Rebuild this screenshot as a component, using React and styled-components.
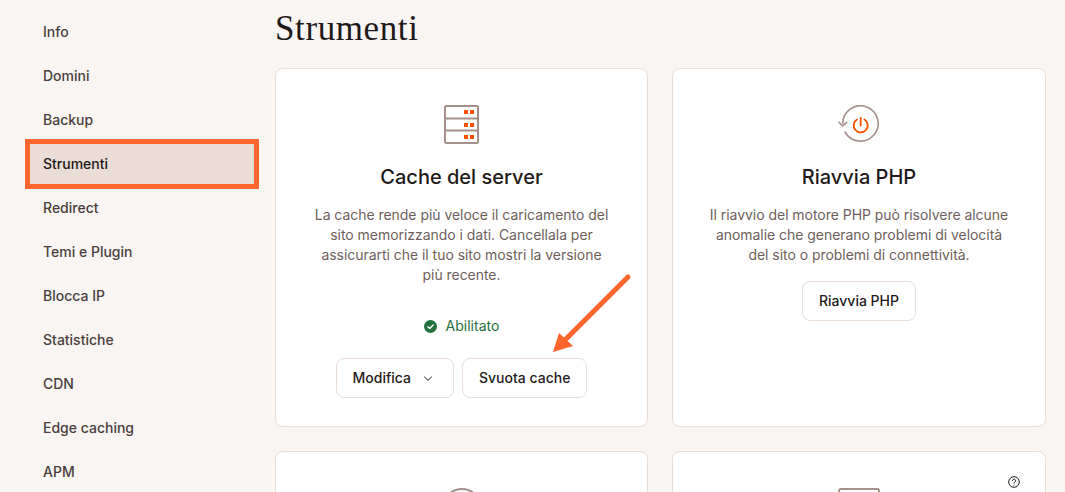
import React from 'react'
import styled, { createGlobalStyle } from 'styled-components'

const GlobalStyle = createGlobalStyle`
    html, body {
        margin: 0;
        height: 100%;
        background: #f8f5f2;
        font-family: Inter, "Liberation Sans", sans-serif;
        overflow: hidden;
    }
`

const Page = styled.div`
    position: relative;
    display: flex;
    width: 1065px;
    height: 492px;
    overflow: hidden;
    background: #f8f5f2;
`

const Sidebar = styled.nav`
    flex: none;
    width: 224px;
    margin: 12px 21px 0 30px;
    display: flex;
    flex-direction: column;
    gap: 4px;
`

const NavItem = styled.a`
    height: 40px;
    box-sizing: border-box;
    flex: none;
    display: flex;
    align-items: center;
    padding: 0 0 2px 13px;
    font-size: 14px;
    font-weight: 500;
    color: ${p => (p.$active ? '#1f1a19' : '#4a3f3d')};
    background: ${p => (p.$active ? '#e9ddd6' : 'transparent')};
    outline: ${p => (p.$active ? '5px solid #ff662d' : 'none')};
`

const Main = styled.main`
    flex: none;
    width: 771px;
`

const Title = styled.h1`
    margin: 8px 0 19px;
    height: 41px;
    font-family: "Liberation Serif", serif;
    font-size: 35px;
    line-height: 41px;
    font-weight: 400;
    letter-spacing: 0.6px;
    color: #1f1a19;
`

const Cards = styled.div`
    display: grid;
    grid-template-columns: 373px 374px;
    grid-auto-rows: 359px;
    gap: 24px;
`

const Card = styled.section`
    position: relative;
    box-sizing: border-box;
    background: #fff;
    border: 1px solid #e9ddd6;
    border-radius: 8px;
    padding: 36px 36px 0;
    display: flex;
    flex-direction: column;
    align-items: center;
    text-align: center;
`

const IconBox = styled.div`
    height: 40px;
    width: 44px;
    display: flex;
    align-items: center;
    justify-content: center;
`

const CardTitle = styled.h2`
    margin: 18px 0 14px;
    font-size: 20px;
    line-height: 28px;
    font-weight: 500;
    color: #1f1a19;
`

const Description = styled.p`
    margin: 0;
    font-size: 14px;
    line-height: 20px;
    letter-spacing: -0.04px;
    color: #6e5f5c;
`

const Status = styled.div`
    margin-top: 31px;
    display: flex;
    align-items: center;
    gap: 9px;
    font-size: 14px;
    line-height: 20px;
    color: #23713c;
`

const Actions = styled.div`
    margin-top: 22px;
    display: flex;
    gap: 8px;
`

const Button = styled.button`
    height: 40px;
    box-sizing: border-box;
    padding: 0 16px 2px;
    display: flex;
    align-items: center;
    gap: 12px;
    background: #fff;
    border: 1px solid #e9ddd6;
    border-radius: 8px;
    font-family: inherit;
    font-size: 14px;
    font-weight: 500;
    color: #1f1a19;
`

const SoloButton = styled(Button)`
    margin-top: 16px;
`

const ChevronIcon = styled.svg`
    margin: 3px 4px 0 0;
`

const HelpIcon = styled.svg`
    position: absolute;
    top: 24px;
    right: 25px;
`

const Arrow = styled.svg`
    position: absolute;
    left: 540px;
    top: 265px;
    pointer-events: none;
`

const items = ['Info', 'Domini', 'Backup', 'Strumenti', 'Redirect', 'Temi e Plugin', 'Blocca IP', 'Statistiche', 'CDN', 'Edge caching', 'APM']

const ServerIcon = () => (
    <svg width="37" height="40" viewBox="0 0 37 40" fill="none">
        <rect x="2" y="1" width="33" height="37" rx="1.5" stroke="#a48f8b" strokeWidth="2" />
        <path d="M2 13.5h33M2 25.5h33" stroke="#a48f8b" strokeWidth="2" />
        <path d="M21 5h4v4h-4zM27 5h4v4h-4zM21 18h4v4h-4zM27 18h4v4h-4zM21 30h4v4h-4zM27 30h4v4h-4z" fill="#fe5100" />
    </svg>
)

const RestartIcon = () => (
    <svg width="44" height="40" viewBox="0 0 44 40" fill="none">
        <path d="M5.8 18.3A17.7 17.7 0 1 1 8 27" stroke="#a48f8b" strokeWidth="1.6" strokeLinecap="round" />
        <path d="M2 17.3l3.7 3.7 4-3.7" stroke="#a48f8b" strokeWidth="1.6" strokeLinecap="round" strokeLinejoin="round" />
        <path d="M20 14.5a7 7 0 1 0 7.4 0M23.7 13v7.5" stroke="#fe5100" strokeWidth="1.8" strokeLinecap="round" />
    </svg>
)

const Check = () => (
    <svg width="13" height="13" viewBox="0 0 13 13">
        <circle cx="6.5" cy="6.5" r="6.5" fill="#23713c" />
        <path d="M3.8 6.7l1.9 1.8 3.5-3.6" fill="none" stroke="#fff" strokeWidth="1.4" strokeLinecap="round" strokeLinejoin="round" />
    </svg>
)

const Chevron = () => (
    <ChevronIcon width="10" height="6" viewBox="0 0 10 6" fill="none">
        <path d="M1.5 1l3.5 3.4L8.5 1" stroke="#1f1a19" strokeWidth="1" strokeLinecap="round" />
    </ChevronIcon>
)

const App = () => (
    <Page>
        <GlobalStyle />
        <Sidebar>
            {items.map(item => (
                <NavItem key={item} $active={item === 'Strumenti'}>{item}</NavItem>
            ))}
        </Sidebar>
        <Main>
            <Title>Strumenti</Title>
            <Cards>
                <Card>
                    <IconBox><ServerIcon /></IconBox>
                    <CardTitle>Cache del server</CardTitle>
                    <Description>
                        La cache rende più veloce il caricamento del sito memorizzando i dati. Cancellala per assicurarti che il tuo sito mostri la versione più recente.
                    </Description>
                    <Status><Check />Abilitato</Status>
                    <Actions>
                        <Button>Modifica <Chevron /></Button>
                        <Button>Svuota cache</Button>
                    </Actions>
                </Card>
                <Card>
                    <IconBox><RestartIcon /></IconBox>
                    <CardTitle>Riavvia PHP</CardTitle>
                    <Description>
                        Il riavvio del motore PHP può risolvere alcune anomalie che generano problemi di velocità del sito o problemi di connettività.
                    </Description>
                    <SoloButton>Riavvia PHP</SoloButton>
                </Card>
                <Card>
                    <IconBox>
                        <svg width="40" height="40" viewBox="0 0 40 40" fill="none">
                            <circle cx="20" cy="20" r="19" stroke="#a48f8b" strokeWidth="2" />
                        </svg>
                    </IconBox>
                </Card>
                <Card>
                    <HelpIcon width="12" height="12" viewBox="0 0 12 12" fill="none">
                        <circle cx="6" cy="6" r="5.3" stroke="#1f1a19" strokeWidth="1" />
                        <path d="M4.4 4.7a1.6 1.6 0 1 1 2.4 1.4c-.5.3-.8.6-.8 1.1" stroke="#1f1a19" strokeWidth="1" strokeLinecap="round" />
                        <circle cx="6" cy="9" r=".6" fill="#1f1a19" />
                    </HelpIcon>
                    <IconBox>
                        <svg width="42" height="40" viewBox="0 0 42 40" fill="none">
                            <rect x="1" y="1" width="40" height="30" rx="2" stroke="#a48f8b" strokeWidth="2" />
                        </svg>
                    </IconBox>
                </Card>
            </Cards>
        </Main>
        <Arrow width="100" height="100" viewBox="0 0 100 100" fill="none">
            <path d="M88 12L24 76" stroke="#ff662d" strokeWidth="5" strokeLinecap="round" />
            <path d="M13 87L19 68L33 81Z" fill="#ff662d" />
        </Arrow>
    </Page>
)

export default App
